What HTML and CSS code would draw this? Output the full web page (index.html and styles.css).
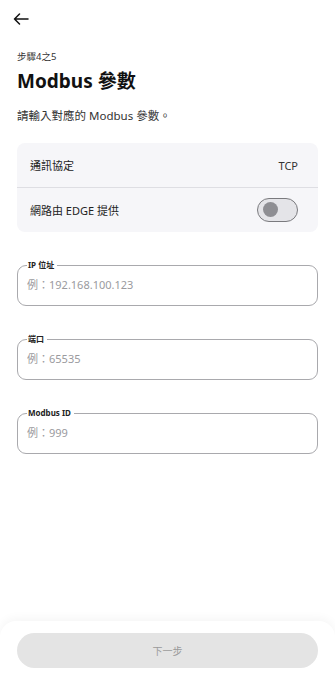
FILE: index.html
```html
<!DOCTYPE html>
<html lang="zh-Hant">
<head>
    <meta charset="UTF-8">
    <meta name="viewport" content="width=device-width, initial-scale=1.0">
    <title>Modbus 參數</title>
    <link rel="stylesheet" href="styles.css">
</head>
<body>
    <div class="page">
        <div class="top-bar">
            <svg class="back" width="16" height="12" viewBox="0 0 16 12" fill="none" stroke="#111" stroke-width="1.5" stroke-linecap="round" stroke-linejoin="round">
                <path d="M15 6H1.5M6.5 1L1.5 6l5 5"/>
            </svg>
        </div>

        <main class="content">
            <div class="step">步驟4之5</div>
            <h1 class="title">Modbus 參數</h1>
            <p class="subtitle">請輸入對應的 Modbus 參數。</p>

            <!-- 通訊設定 -->
            <div class="settings-card">
                <div class="setting-row">
                    <span>通訊協定</span>
                    <span class="value">TCP</span>
                </div>
                <div class="setting-row">
                    <span>網路由 EDGE 提供</span>
                    <div class="toggle"><div class="knob"></div></div>
                </div>
            </div>

            <fieldset class="field">
                <legend>IP 位址</legend>
                <input type="text" placeholder="例：192.168.100.123">
            </fieldset>
            <fieldset class="field">
                <legend>端口</legend>
                <input type="text" placeholder="例：65535">
            </fieldset>
            <fieldset class="field">
                <legend>Modbus ID</legend>
                <input type="text" placeholder="例：999">
            </fieldset>
        </main>

        <div class="footer">
            <button type="button" disabled>下一步</button>
        </div>
    </div>
</body>
</html>
```

FILE: styles.css
```css
* {
    box-sizing: border-box;
}

body {
    margin: 0;
    font-family: "Noto Sans", "Noto Sans CJK TC", sans-serif;
    color: #111;
    background: #fff;
}

.page {
    height: 680px;
    display: flex;
    flex-direction: column;
}

.top-bar {
    height: 38px;
    padding: 13px 0 0 13px;
}

.back {
    display: block;
}

.content {
    flex: 1;
    padding: 0 17px;
}

.step {
    margin-top: 12px;
    font-size: 9.5px;
    line-height: 14px;
    color: #333;
}

.title {
    margin: 4px 0 0;
    font-size: 19px;
    line-height: 26px;
    font-weight: 700;
}

.subtitle {
    margin: 14px 0 0;
    font-size: 11.5px;
    line-height: 16px;
    color: #333;
}

.settings-card {
    margin-top: 19px;
    background: #f6f6f9;
    border-radius: 8px;
}

.setting-row {
    height: 44px;
    display: flex;
    align-items: center;
    justify-content: space-between;
    padding: 0 20px 0 13px;
    font-size: 11px;
    color: #222;
}

.setting-row + .setting-row {
    height: 45px;
    border-top: 1px solid #dedee3;
}

.value {
    color: #333;
}

.toggle {
    width: 41px;
    height: 24px;
    border: 1.5px solid #7a7a7e;
    border-radius: 12px;
    background: #e4e4e8;
    padding: 3px 0 0 5px;
}

.knob {
    width: 15px;
    height: 15px;
    border-radius: 50%;
    background: #8e8e93;
}

.field {
    margin: 0;
    height: 46px;
    padding: 0 9px;
    border: 1px solid #a9a9ad;
    border-radius: 9px;
}

.settings-card + .field {
    margin-top: 28px;
}

.field + .field {
    margin-top: 28px;
}

legend {
    margin-left: 0;
    padding: 0 3px 0 1px;
    font-size: 8px;
    line-height: 10px;
    font-weight: 700;
    color: #222;
}

input {
    width: 100%;
    border: none;
    outline: none;
    padding: 0;
    margin-top: 6px;
    font-family: inherit;
    font-size: 11px;
    line-height: 18px;
    background: transparent;
}

input::placeholder {
    color: #9a9a9e;
}

.footer {
    height: 59px;
    padding: 12px 17px 0;
    border-radius: 16px 16px 0 0;
    box-shadow: 0 -3px 10px rgba(0,0,0,0.04);
    background: #fff;
}

button {
    width: 100%;
    height: 35px;
    border: none;
    border-radius: 18px;
    background: #e4e4e4;
    color: #9a9a9a;
    font-family: inherit;
    font-size: 10px;
}
```
